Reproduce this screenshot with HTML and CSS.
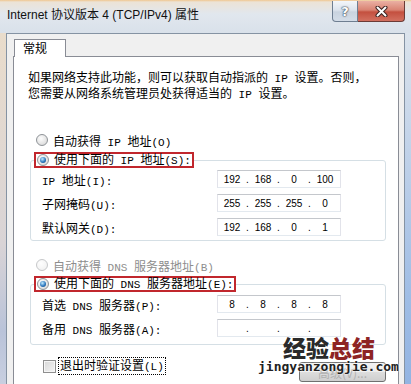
FILE: index.html
```html
<!DOCTYPE html>
<html lang="zh-CN">
<head>
    <meta charset="UTF-8">
    <title>Internet 协议版本 4 (TCP/IPv4) 属性</title>
    <link rel="stylesheet" href="styles.css">
</head>
<body>
    <div class="window">
        <div class="titlebar">
            <span class="title">Internet 协议版本 4 (TCP/IPv4) 属性</span>
            <div class="caption-btns">
                <button class="help">?</button>
                <button class="close">
                    <svg width="13" height="11" viewBox="0 0 13 11">
                        <path d="M2.5 1.5 L10.5 9.5 M10.5 1.5 L2.5 9.5" stroke="#3b2320" stroke-width="4" stroke-linecap="round"/>
                        <path d="M2.5 1.5 L10.5 9.5 M10.5 1.5 L2.5 9.5" stroke="#fff" stroke-width="2" stroke-linecap="round"/>
                    </svg>
                </button>
            </div>
        </div>
        <div class="frame">
            <div class="side left"></div>
            <div class="client">
                <div class="tabs"><span class="tab">常规</span></div>
                <div class="panel">
                    <p class="intro">如果网络支持此功能，则可以获取自动指派的<span class="en"> IP </span>设置。否则，<br>您需要从网络系统管理员处获得适当的<span class="en"> IP </span>设置。</p>

                    <div class="choice first">
                        <span class="radio"></span>
                        <span>自动获得<span class="en"> IP </span>地址<span class="en">(O)</span></span>
                    </div>
                    <fieldset class="group ip-group">
                        <legend class="pick">
                            <span class="radio on"></span>
                            <span>使用下面的<span class="en"> IP </span>地址<span class="en">(S):</span></span>
                        </legend>
                        <div class="field">
                            <span><span class="en">IP </span>地址<span class="en">(I):</span></span>
                            <div class="ip"><span class="oct">192</span><span class="dot">.</span><span class="oct">168</span><span class="dot">.</span><span class="oct">0</span><span class="dot">.</span><span class="oct">100</span></div>
                        </div>
                        <div class="field">
                            <span>子网掩码<span class="en">(U):</span></span>
                            <div class="ip"><span class="oct">255</span><span class="dot">.</span><span class="oct">255</span><span class="dot">.</span><span class="oct">255</span><span class="dot">.</span><span class="oct">0</span></div>
                        </div>
                        <div class="field">
                            <span>默认网关<span class="en">(D):</span></span>
                            <div class="ip"><span class="oct">192</span><span class="dot">.</span><span class="oct">168</span><span class="dot">.</span><span class="oct">0</span><span class="dot">.</span><span class="oct">1</span></div>
                        </div>
                    </fieldset>

                    <div class="choice second disabled">
                        <span class="radio"></span>
                        <span>自动获得<span class="en"> DNS </span>服务器地址<span class="en">(B)</span></span>
                    </div>
                    <fieldset class="group dns-group">
                        <legend class="pick">
                            <span class="radio on"></span>
                            <span>使用下面的<span class="en"> DNS </span>服务器地址<span class="en">(E):</span></span>
                        </legend>
                        <div class="field">
                            <span>首选<span class="en"> DNS </span>服务器<span class="en">(P):</span></span>
                            <div class="ip"><span class="oct">8</span><span class="dot">.</span><span class="oct">8</span><span class="dot">.</span><span class="oct">8</span><span class="dot">.</span><span class="oct">8</span></div>
                        </div>
                        <div class="field">
                            <span>备用<span class="en"> DNS </span>服务器<span class="en">(A):</span></span>
                            <div class="ip"><span class="oct"></span><span class="dot">.</span><span class="oct"></span><span class="dot">.</span><span class="oct"></span><span class="dot">.</span><span class="oct"></span></div>
                        </div>
                    </fieldset>

                    <div class="footer">
                        <label class="check">
                            <span class="box"></span>
                            <span class="focus">退出时验证设置<span class="en">(L)</span></span>
                        </label>
                        <button class="advanced">高级(V)...</button>
                    </div>
                </div>
            </div>
            <div class="side right"></div>
        </div>

        <div class="watermark">
            <div class="wm-cn"><span class="dark">经验</span><span class="red">总结</span></div>
            <div class="wm-url">jingyanzongjie.com</div>
        </div>
    </div>
</body>
</html>
```

FILE: styles.css
```css
* {
    box-sizing: border-box;
}
body {
    margin: 0;
    width: 411px;
    height: 384px;
    overflow: hidden;
    font-family: "Noto Sans CJK SC", sans-serif;
    font-size: 12px;
    color: #000;
}
.en {
    font-family: "Liberation Mono", monospace;
    font-size: 11px;
}
.window {
    position: relative;
    height: 384px;
    display: flex;
    flex-direction: column;
}
.titlebar {
    height: 33px;
    display: flex;
    align-items: flex-start;
    background: linear-gradient(to bottom, #efc690 0, #ece3d6 2px, #e1e7ee 14px, #d9e1ea 100%);
}
.title {
    font-family: "Liberation Sans", "Noto Sans CJK SC", sans-serif;
    font-size: 12px;
    line-height: 14px;
    margin-top: 8px;
    padding-left: 7px;
    color: #111;
}
.caption-btns {
    margin-left: auto;
    margin-right: 6px;
    margin-top: 1px;
    display: flex;
}
.caption-btns button {
    height: 21px;
    padding: 0;
    margin: 0;
    display: flex;
    align-items: center;
    justify-content: center;
}
.help {
    width: 26px;
    border: 1px solid #6e7e91;
    border-top: none;
    border-radius: 0 0 0 4px;
    background: linear-gradient(to bottom, #f3f6fa, #dde4ed 45%, #c9d3df 55%, #d4dde8);
    color: #fff;
    font-family: "DejaVu Sans", sans-serif;
    font-weight: bold;
    font-size: 13px;
    text-shadow: 0 0 1px #3d4b5c, 0 0 1px #3d4b5c, 0 0 2px #3d4b5c;
}
.close {
    width: 47px;
    border: 1px solid #6b3b36;
    border-left: none;
    border-top: none;
    border-radius: 0 0 4px 0;
    background: linear-gradient(to bottom, #eab0a3, #d98373 45%, #c4503f 55%, #d27060);
}
.frame {
    flex: 1;
    display: flex;
}
.side {
    width: 6px;
}
.side.left {
    background: linear-gradient(to bottom, #e9dccb, #d9d4d6 60%, #b9c3d9 85%, #c8cfe0);
}
.side.right {
    background: linear-gradient(to bottom, #dbe3ec, #bccfe8 40%, #9fbde5 75%, #93b4e2);
}
.client {
    flex: 1;
    display: flex;
    flex-direction: column;
    background: #f0f0f0;
    border: 1px solid #8593a3;
    border-bottom: none;
    padding: 0 5px 0 6px;
}
.tabs {
    padding-top: 5px;
    display: flex;
}
.tab {
    position: relative;
    z-index: 1;
    margin-left: 1px;
    margin-bottom: -1px;
    width: 52px;
    height: 18px;
    padding-left: 8px;
    line-height: 16px;
    background: #fff;
    border: 1px solid #898c95;
    border-bottom: none;
}
.panel {
    flex: 1;
    background: #fff;
    border: 1px solid #898c95;
    border-bottom: none;
    padding: 13px 12px 0 14px;
}
.intro {
    margin: 0;
    line-height: 14px;
    white-space: nowrap;
}
.choice {
    display: flex;
    align-items: center;
    gap: 5px;
    height: 20px;
    padding-left: 8px;
    white-space: nowrap;
}
.choice.first {
    margin-top: 28px;
}
.choice.second {
    margin-top: 14px;
}
.choice.disabled {
    color: #8d8d8d;
}
.radio {
    position: relative;
    flex: none;
    width: 12px;
    height: 12px;
    border-radius: 50%;
    border: 1px solid #8e9397;
    background: radial-gradient(circle at 40% 35%, #fdfdfd, #e4e4e4 60%, #cfcfcf);
}
.disabled .radio {
    border-color: #c6c8ca;
    background: radial-gradient(circle at 40% 35%, #fefefe, #eeeeee);
}
.radio.on::after {
    content: "";
    position: absolute;
    left: 2px;
    top: 2px;
    width: 6px;
    height: 6px;
    border-radius: 50%;
    background: radial-gradient(circle at 40% 35%, #c4ecff, #2e79c0 55%, #0f3f74);
}
.group {
    margin: 2px 0 0 2px;
    padding: 0 0 4px 3px;
    border: 1px solid #d5dfe5;
    border-radius: 3px;
    min-width: 0;
}
.dns-group {
    margin-top: 1px;
    padding-bottom: 7px;
}
.pick {
    display: flex;
    align-items: center;
    gap: 5px;
    height: 16px;
    padding: 0 1px;
    line-height: 12px;
    border: 2px solid #c1272d;
    background: #fff;
    white-space: nowrap;
}
.field {
    display: grid;
    grid-template-columns: 175px 124px;
    align-items: center;
    padding-left: 8px;
    margin-top: 6px;
    white-space: nowrap;
}
.pick + .field {
    margin-top: 2px;
}
.dns-group .pick + .field {
    margin-top: 3px;
}
.ip {
    height: 18px;
    display: flex;
    align-items: center;
    padding-left: 2px;
    border: 1px solid;
    border-color: #c4c7cc #e2e3ea #e3e9ef #e2e3ea;
    font-family: "Liberation Sans", sans-serif;
    font-size: 10px;
}
.oct {
    width: 24px;
    text-align: center;
}
.dot {
    width: 7px;
    text-align: center;
}
.footer {
    display: flex;
    align-items: flex-start;
    margin-top: 11px;
}
.check {
    display: flex;
    align-items: center;
    gap: 2px;
    height: 20px;
    padding-left: 15px;
}
.box {
    width: 13px;
    height: 13px;
    border: 1px solid #8f8f8f;
    background: linear-gradient(135deg, #d8d8d8, #f4f4f4);
    box-shadow: inset 0 0 0 1px #f6f6f6;
}
.focus {
    border: 1px dotted #000;
    padding: 0 1px;
    line-height: 14px;
}
.advanced {
    margin-left: auto;
    margin-top: 6px;
    width: 87px;
    height: 20px;
    border: 1px solid #707070;
    border-radius: 3px;
    background: linear-gradient(to bottom, #f2f2f2, #ebebeb 50%, #dddddd 50%, #cfcfcf);
    font-family: "Noto Sans CJK SC", sans-serif;
    font-size: 12px;
    color: #b0b0b0;
    padding: 0;
}
.watermark {
    position: absolute;
    left: 258px;
    top: 337px;
    width: 142px;
}
.wm-cn {
    padding-left: 25px;
    font-size: 23px;
    font-weight: 900;
    line-height: 20px;
}
.wm-cn .dark {
    color: #2a2a2a;
}
.wm-cn .red {
    color: #8e2424;
}
.wm-url {
    margin-top: 2px;
    font-family: "DejaVu Sans Mono", monospace;
    font-weight: bold;
    font-size: 13px;
    line-height: 16px;
    color: #222;
    text-shadow: 0 0 2px #fff, 0 0 2px #fff;
}
```
